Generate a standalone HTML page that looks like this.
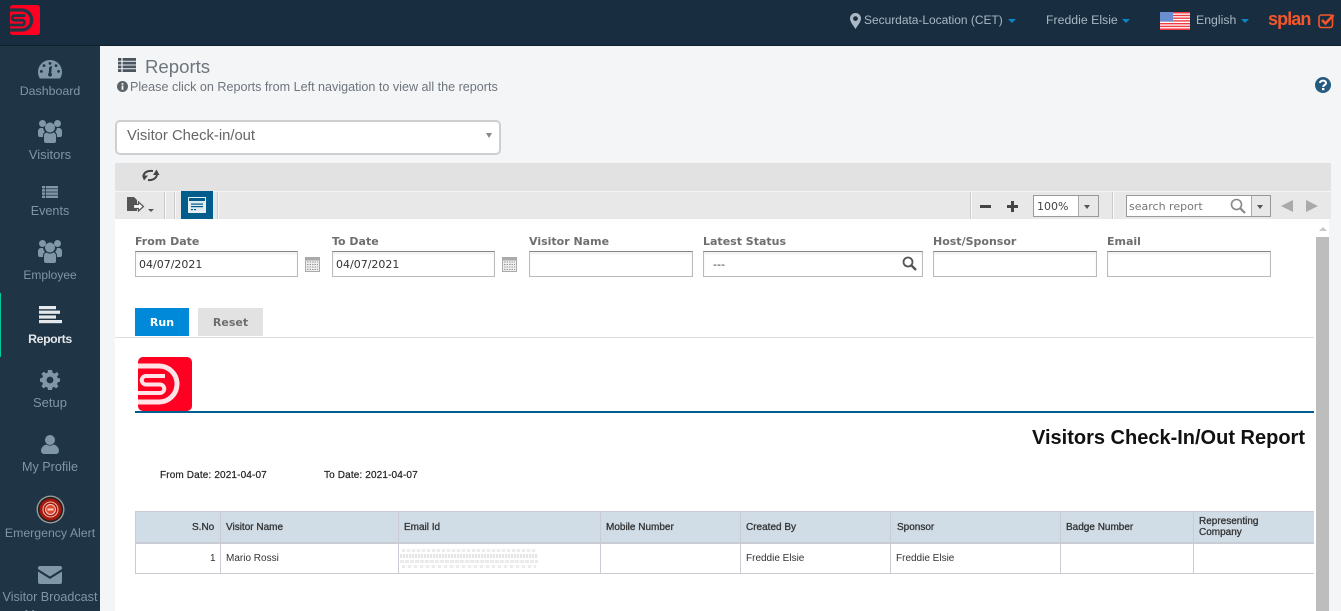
<!DOCTYPE html>
<html><head><meta charset="utf-8"><style>
*{box-sizing:border-box}
html,body{margin:0;padding:0;width:1341px;height:611px;overflow:hidden;background:#f4f5f7}
body{position:relative;font-family:"Liberation Sans",sans-serif}
.a{position:absolute}
.t{position:absolute;white-space:nowrap}
.nav{position:absolute;left:0;width:100px;text-align:center;font-size:12.6px;color:#8095a5;white-space:nowrap;line-height:16px}
.top{position:absolute;white-space:nowrap;font-size:12.3px;color:#a9b8c4;line-height:16px;top:12px}
.car{position:absolute;top:19px;width:0;height:0;border-left:4px solid transparent;border-right:4px solid transparent;border-top:4px solid #0a86c8}
.lab{position:absolute;top:235px;font:bold 11px/14px "DejaVu Sans",sans-serif;color:#6e6e6e;white-space:nowrap}
.in{position:absolute;top:251px;height:26px;background:#fff;border:1px solid #bbb;border-top:1px solid #858585;font:11px/26px "DejaVu Sans",sans-serif;color:#333;padding-left:3px;box-shadow:inset 0 2px 2px #f0f0f0}
.th,.td{position:absolute;font-size:10px;color:#222;white-space:nowrap;line-height:11px}
.th{font-weight:bold;top:522px;color:#333;font-weight:normal;-webkit-text-stroke:.3px #333}
.td{top:552px;color:#333}
.v{position:absolute;width:1px;top:511px;height:62px;background:#c9ccd4}
.sep{position:absolute;top:192px;width:1px;height:27px;background:#ccc;box-shadow:1px 0 0 #f8f8f8}
</style></head><body>

<div class="a" style="left:0;top:0;width:1341px;height:46px;background:#182e40;border-bottom:1px solid #10202c"></div>
<svg class="a" style="left:10px;top:5px" width="30" height="30" viewBox="0 0 54 54"><rect width="54" height="54" rx="5" fill="#ff0022"/><g fill="none" stroke="#1f3545" stroke-width="6"><path d="M0 9H21A18 18 0 0 1 21 45H0"/><path d="M27 19H8A4.2 4.2 0 0 0 8 27.5H22A4.2 4.2 0 0 1 22 36H0" stroke-width="5"/></g></svg>

<svg class="a" style="left:850px;top:13px" width="11" height="16" viewBox="0 0 11 16"><path fill-rule="evenodd" d="M5.5 0A5.5 5.5 0 0 0 0 5.5C0 9 3.5 12.5 5.5 16 7.5 12.5 11 9 11 5.5A5.5 5.5 0 0 0 5.5 0ZM5.5 3.2A2.4 2.4 0 1 1 5.5 8 2.4 2.4 0 0 1 5.5 3.2Z" fill="#a9b8c4"/></svg>
<div class="top" style="left:864px;font-size:11.95px">Securdata-Location (CET)</div><div class="car" style="left:1008px"></div>
<div class="top" style="left:1046px">Freddie Elsie</div><div class="car" style="left:1122px"></div>
<svg class="a" style="left:1160px;top:12px" width="30" height="18" viewBox="0 0 30 18"><rect width="30" height="18" fill="#fff"/><g fill="#ee3b44"><rect width="30" height="1.5"/><rect y="2.8" width="30" height="1.4"/><rect y="5.5" width="30" height="1.4"/><rect y="8.2" width="30" height="1.4"/><rect y="11" width="30" height="1.4"/><rect y="13.7" width="30" height="1.4"/><rect y="16.4" width="30" height="1.6"/></g><rect width="13" height="9.6" fill="#6b8ed0"/></svg>
<div class="top" style="left:1196px">English</div><div class="car" style="left:1241px"></div>
<div class="t" style="left:1268px;top:9px;font:bold 18px/20px 'Liberation Sans',sans-serif;color:#f4562a;letter-spacing:-.9px">splan</div>
<svg class="a" style="left:1318px;top:12px" width="17" height="17" viewBox="0 0 17 17"><rect x="1" y="3" width="13.5" height="12.5" rx="2.5" fill="none" stroke="#f4562a" stroke-width="1.6"/><path d="M4 8L7.500 11.500 15.500 3" fill="none" stroke="#f4562a" stroke-width="2.600"/></svg>

<div class="a" style="left:0;top:46px;width:100px;height:565px;background:#1f3545"></div>
<div class="a" style="left:0;top:293px;width:1px;height:64px;background:#00c8a0"></div>

<svg class="a" style="left:38px;top:60px" width="24" height="19" viewBox="0 0 24 19"><path fill="#8097a8" fill-rule="evenodd" d="M12 0A12 12 0 0 0 0 12C0 14.5 .7 16.8 2 18.5L22 18.5C23.3 16.8 24 14.5 24 12A12 12 0 0 0 12 0ZM12 2A1.4 1.4 0 1 1 12 4.8 1.4 1.4 0 0 1 12 2ZM6 4.2A1.4 1.4 0 1 1 6 7 1.4 1.4 0 0 1 6 4.2ZM18 4.2A1.4 1.4 0 1 1 18 7 1.4 1.4 0 0 1 18 4.2ZM3.4 10A1.4 1.4 0 1 1 3.4 12.8 1.4 1.4 0 0 1 3.4 10ZM20.6 10A1.4 1.4 0 1 1 20.6 12.8 1.4 1.4 0 0 1 20.6 10ZM14 6L13.2 13A2 2 0 1 1 10.8 13L11.2 7Z"/></svg>
<div class="nav" style="top:83px;font-size:12.4px">Dashboard</div>

<svg class="a" style="left:38px;top:120px" width="24" height="23" viewBox="0 0 24 23"><g fill="#8097a8"><circle cx="4.5" cy="3.5" r="3.5"/><circle cx="19.5" cy="3.5" r="3.5"/><circle cx="12" cy="7.500" r="5"/><path d="M0 11A3 3 0 0 1 3 8H5C5.5 10 6 11 7 12 5 13 5 15 5 17H2A2 2 0 0 1 0 15Z"/><path d="M24 11A3 3 0 0 0 21 8H19C18.5 10 18 11 17 12 19 13 19 15 19 17H22A2 2 0 0 0 24 15Z"/><path d="M6 16C6 14 7 13 8.5 12.5 11 14 13 14 15.5 12.5 17 13 18 14 18 16V21A2 2 0 0 1 16 23H8A2 2 0 0 1 6 21Z"/></g></svg>
<div class="nav" style="top:147px;font-size:13px">Visitors</div>

<svg class="a" style="left:42px;top:186px" width="16" height="12" viewBox="0 0 16 12"><g fill="#8097a8"><rect width="16" height="2.4"/><rect y="3.2" width="16" height="2.4"/><rect y="6.4" width="16" height="2.4"/><rect y="9.6" width="16" height="2.4"/></g><rect x="3" width=".8" height="12" fill="#1f3545"/></svg>
<div class="nav" style="top:203px">Events</div>

<svg class="a" style="left:38px;top:240px" width="24" height="23" viewBox="0 0 24 23"><g fill="#8097a8"><circle cx="4.5" cy="3.5" r="3.5"/><circle cx="19.5" cy="3.5" r="3.5"/><circle cx="12" cy="7.500" r="5"/><path d="M0 11A3 3 0 0 1 3 8H5C5.5 10 6 11 7 12 5 13 5 15 5 17H2A2 2 0 0 1 0 15Z"/><path d="M24 11A3 3 0 0 0 21 8H19C18.5 10 18 11 17 12 19 13 19 15 19 17H22A2 2 0 0 0 24 15Z"/><path d="M6 16C6 14 7 13 8.5 12.5 11 14 13 14 15.5 12.5 17 13 18 14 18 16V21A2 2 0 0 1 16 23H8A2 2 0 0 1 6 21Z"/></g></svg>
<div class="nav" style="top:267px;font-size:12px">Employee</div>

<svg class="a" style="left:39px;top:306px" width="23" height="18" viewBox="0 0 23 18"><g fill="#e6e9ec"><rect width="17" height="3.2"/><rect y="4.6" width="21" height="3.2"/><rect y="9.4" width="17" height="3.2"/><rect y="14" width="23" height="3.2"/></g></svg>
<div class="nav" style="top:331px;color:#e4e7ea;font-weight:bold;font-size:12.3px;letter-spacing:-.4px">Reports</div>

<svg class="a" style="left:40px;top:370px" width="20" height="20" viewBox="0 0 20 20"><path fill="#8097a8" fill-rule="evenodd" d="M8 0H12L12.6 2.8 14.6 3.6 17 2 18.8 4.4 17 6.4 17.8 8.2 20 8.4V11.6L17.8 12.2 17 14 18.4 16.4 16 18.4 14 16.8 12.4 17.6 12 20H8L7.6 17.6 5.8 16.8 3.6 18.4 1.4 16 3 14 2.2 12.2 0 11.6V8.4L2.2 8 3 6 1.4 4 3.8 1.8 6 3.4 7.6 2.6ZM10 6.6A3.4 3.4 0 1 0 10 13.4 3.4 3.4 0 0 0 10 6.6Z"/></svg>
<div class="nav" style="top:395px;font-size:13px">Setup</div>

<svg class="a" style="left:41px;top:435px" width="18" height="19" viewBox="0 0 18 19"><circle cx="9" cy="5" r="5" fill="#8097a8"/><path d="M0 16C0 12 3 10 5.5 9.5 7.5 11 10.5 11 12.5 9.5 15 10 18 12 18 16A3 3 0 0 1 15 19H3A3 3 0 0 1 0 16Z" fill="#8097a8"/></svg>
<div class="nav" style="top:459px">My Profile</div>

<svg class="a" style="left:36px;top:495px" width="29" height="29" viewBox="0 0 29 29"><circle cx="14.5" cy="14.5" r="14" fill="#9a9a9a"/><circle cx="14.5" cy="14.5" r="12.6" fill="#222"/><circle cx="14.5" cy="14.5" r="11" fill="#a5180e"/><circle cx="14.5" cy="14.5" r="7.5" fill="none" stroke="#f0c0b0" stroke-width="1"/><circle cx="14.5" cy="14.5" r="5" fill="#e04a30" stroke="#f5d0c5" stroke-width="1"/><rect x="11.5" y="13.5" width="6" height="2" fill="#f5d0c5"/></svg>
<div class="nav" style="top:525px;font-size:12.3px">Emergency Alert</div>

<svg class="a" style="left:38px;top:566px" width="24" height="18" viewBox="0 0 24 18"><path fill="#8097a8" d="M2 0H22A2 2 0 0 1 24 2V3L12 10.5 0 3V2A2 2 0 0 1 2 0ZM0 5.5L12 13 24 5.5V16A2 2 0 0 1 22 18H2A2 2 0 0 1 0 16Z"/></svg>
<div class="nav" style="top:589px">Visitor Broadcast</div>
<div class="nav" style="top:607px">Message</div>

<svg class="a" style="left:118px;top:58px" width="18" height="14" viewBox="0 0 18 15" preserveAspectRatio="none"><g fill="#4a5560"><rect width="3.4" height="3"/><rect x="4.6" width="13.4" height="3"/><rect y="4" width="3.4" height="3"/><rect x="4.6" y="4" width="13.4" height="3"/><rect y="8" width="3.4" height="3"/><rect x="4.6" y="8" width="13.4" height="3"/><rect y="12" width="3.4" height="3"/><rect x="4.6" y="12" width="13.4" height="3"/></g></svg>
<div class="t" style="left:145px;top:55px;font-size:18.6px;line-height:23px;color:#6d757c">Reports</div>
<svg class="a" style="left:117px;top:81px" width="11" height="11" viewBox="0 0 11 11"><circle cx="5.5" cy="5.5" r="5.5" fill="#5a6268"/><rect x="4.6" y="4.6" width="1.8" height="4.2" fill="#f4f5f7"/><rect x="4.6" y="2.2" width="1.8" height="1.6" fill="#f4f5f7"/></svg>
<div class="t" style="left:130px;top:79px;font-size:12.58px;line-height:16px;color:#6d757c">Please click on Reports from Left navigation to view all the reports</div>
<svg class="a" style="left:1315px;top:77px" width="16" height="16" viewBox="0 0 16 16"><circle cx="8" cy="8" r="8" fill="#265a7e"/><path d="M5 6C5 2.8 11 2.8 11 6 11 8 8.2 7.8 8.2 10" fill="none" stroke="#fff" stroke-width="2"/><rect x="7" y="11" width="2.4" height="2.2" fill="#fff"/></svg>

<div class="a" style="left:115px;top:120px;width:386px;height:35px;background:#fff;border:2px solid #cfcfcf;border-radius:5px"></div>
<div class="t" style="left:127px;top:127px;font-size:14.8px;line-height:18px;color:#666">Visitor Check-in/out</div>
<div class="a" style="left:486px;top:133px;border-left:3px solid transparent;border-right:3px solid transparent;border-top:5px solid #888"></div>

<div class="a" style="left:115px;top:163px;width:1216px;height:28px;background:#e2e2e2"></div>
<svg class="a" style="left:141px;top:169px" width="19" height="13" viewBox="0 0 19 13"><path fill="none" stroke="#444" stroke-width="2" d="M2.5 6.5C3.5 3 7 1.5 12 2"/><path fill="#444" d="M12 6H18.5L15.5 0.500ZM1 6.500H7L3 11.500Z"/><path fill="none" stroke="#444" stroke-width="2" d="M16 6C15 9.800 11 11.500 7 11"/></svg>

<div class="a" style="left:115px;top:192px;width:1216px;height:27px;background:#e8e8e8"></div>
<svg class="a" style="left:127px;top:197px" width="18" height="17" viewBox="0 0 18 17"><path fill="#555" d="M0 0H7L10 3V7H7V10H10V14H0Z"/><path fill="#fff" stroke="#555" stroke-width="1.200" d="M6.500 7.500H11.500V5L16.500 9.500 11.500 14V11.500H6.500Z"/></svg>
<div class="a" style="left:148px;top:209px;border-left:3px solid transparent;border-right:3px solid transparent;border-top:3px solid #555"></div>
<div class="sep" style="left:164px"></div><div class="sep" style="left:174px"></div>
<div class="a" style="left:181px;top:191px;width:32px;height:28px;background:#005d8c"></div>
<svg class="a" style="left:188px;top:197px" width="18" height="16" viewBox="0 0 18 16"><rect x=".7" y=".7" width="16.600" height="14.600" fill="#dfe9ef" stroke="#fff" stroke-width="1.200"/><rect x="1" y="1" width="16" height="3" fill="#005d8c"/><rect x="3" y="6.500" width="12" height="1.200" fill="#005d8c"/><rect x="3" y="9" width="12" height="1.200" fill="#005d8c"/><rect x="3" y="12" width="2" height="1.200" fill="#005d8c"/><rect x="6" y="12" width="2" height="1.200" fill="#005d8c"/></svg>
<div class="sep" style="left:217px"></div>
<div class="sep" style="left:970px"></div>
<div class="a" style="left:980px;top:205px;width:11px;height:3px;background:#444"></div>
<div class="a" style="left:1007px;top:205px;width:11px;height:3px;background:#444"></div><div class="a" style="left:1011px;top:201px;width:3px;height:11px;background:#444"></div>
<div class="a" style="left:1033px;top:195px;width:66px;height:22px;background:#fff;border:1px solid #999"></div>
<div class="t" style="left:1037px;top:200px;font:11px/14px 'DejaVu Sans',sans-serif;color:#444">100%</div>
<div class="a" style="left:1078px;top:196px;width:20px;height:20px;background:#e8e8e8;border-left:1px solid #aaa"></div>
<div class="a" style="left:1084px;top:205px;border-left:3px solid transparent;border-right:3px solid transparent;border-top:4px solid #555"></div>
<div class="sep" style="left:1112px"></div>
<div class="a" style="left:1126px;top:195px;width:145px;height:22px;background:#fff;border:1px solid #999"></div>
<div class="t" style="left:1129px;top:200px;font:11px/14px 'DejaVu Sans',sans-serif;color:#777">search report</div>
<svg class="a" style="left:1230px;top:198px" width="16" height="16" viewBox="0 0 16 16"><circle cx="6.500" cy="6.500" r="5" fill="none" stroke="#888" stroke-width="1.600"/><path d="M10 10L15 15" stroke="#888" stroke-width="2.200"/></svg>
<div class="a" style="left:1251px;top:196px;width:19px;height:20px;background:#e8e8e8;border-left:1px solid #aaa"></div>
<div class="a" style="left:1257px;top:205px;border-left:3px solid transparent;border-right:3px solid transparent;border-top:4px solid #555"></div>
<div class="a" style="left:1281px;top:200px;border-top:6px solid transparent;border-bottom:6px solid transparent;border-right:12px solid #aaa"></div>
<div class="a" style="left:1306px;top:200px;border-top:6px solid transparent;border-bottom:6px solid transparent;border-left:12px solid #aaa"></div>

<div class="a" style="left:115px;top:219px;width:1214px;height:392px;background:#fff"></div>
<div class="a" style="left:1316px;top:237px;width:13px;height:374px;background:#bdbdbd"></div>
<div class="a" style="left:1319px;top:227px;border-left:4px solid transparent;border-right:4px solid transparent;border-bottom:4px solid #c8c8c8"></div>

<div class="lab" style="left:135px">From Date</div>
<div class="lab" style="left:332px">To Date</div>
<div class="lab" style="left:529px">Visitor Name</div>
<div class="lab" style="left:703px">Latest Status</div>
<div class="lab" style="left:933px">Host/Sponsor</div>
<div class="lab" style="left:1107px">Email</div>
<div class="in" style="left:135px;width:163px">04/07/2021</div>
<div class="in" style="left:332px;width:163px">04/07/2021</div>
<div class="in" style="left:529px;width:164px"></div>
<div class="in" style="left:703px;width:220px;padding-left:9px">---</div>
<svg class="a" style="left:902px;top:256px" width="15" height="15" viewBox="0 0 15 15"><circle cx="6" cy="6" r="4.500" fill="none" stroke="#555" stroke-width="1.800"/><path d="M9.500 9.500L14 14" stroke="#555" stroke-width="2.400"/></svg>
<div class="in" style="left:933px;width:164px"></div>
<div class="in" style="left:1107px;width:164px"></div>
<svg class="a" style="left:305px;top:257px" width="15" height="15" viewBox="0 0 15 15"><rect x=".5" y=".5" width="14" height="14" fill="#eee" stroke="#aaa"/><rect x="1" y="1" width="13" height="2.500" fill="#aaa"/><path d="M2 5H13M2 7.500H13M2 10H13M2 12.500H13" stroke="#999" stroke-dasharray="1.500 1"/></svg>
<svg class="a" style="left:502px;top:257px" width="15" height="15" viewBox="0 0 15 15"><rect x=".5" y=".5" width="14" height="14" fill="#eee" stroke="#aaa"/><rect x="1" y="1" width="13" height="2.500" fill="#aaa"/><path d="M2 5H13M2 7.500H13M2 10H13M2 12.500H13" stroke="#999" stroke-dasharray="1.500 1"/></svg>

<div class="a" style="left:135px;top:308px;width:54px;height:28px;background:#0088d9;color:#fff;font:bold 11px/30px 'DejaVu Sans',sans-serif;text-align:center">Run</div>
<div class="a" style="left:198px;top:308px;width:65px;height:28px;background:#e2e2e2;color:#6e6e6e;font:bold 11px/30px 'DejaVu Sans',sans-serif;text-align:center">Reset</div>
<div class="a" style="left:115px;top:337px;width:1199px;height:1px;background:#ddd"></div>

<svg class="a" style="left:138px;top:357px" width="54" height="54" viewBox="0 0 54 54"><rect width="54" height="54" rx="5" fill="#ff0022"/><g fill="none" stroke="#ffe3e7" stroke-width="5"><path d="M0 9H21A18 18 0 0 1 21 45H0"/><path d="M27 19H8A4.200 4.200 0 0 0 8 27.500H22A4.200 4.200 0 0 1 22 36H0" stroke-width="4"/></g></svg>
<div class="a" style="left:135px;top:411px;width:1179px;height:2px;background:#005f8f"></div>

<div class="t" style="right:36px;top:426px;font-size:20px;line-height:24px;font-weight:bold;color:#111">Visitors Check-In/Out Report</div>
<div class="t" style="left:160px;top:470px;font-size:10px;letter-spacing:.14px;line-height:11px;color:#222;-webkit-text-stroke:.2px #222">From Date: 2021-04-07</div>
<div class="t" style="left:324px;top:470px;font-size:10px;letter-spacing:.14px;line-height:11px;color:#222;-webkit-text-stroke:.2px #222">To Date: 2021-04-07</div>

<div class="a" style="left:135px;top:511px;width:1179px;height:31px;background:#d0dde7"></div>
<div class="a" style="left:135px;top:511px;width:1179px;height:1px;background:#c9ccd4"></div>
<div class="a" style="left:135px;top:542px;width:1179px;height:2px;background:#c9ccd4"></div>
<div class="a" style="left:135px;top:573px;width:1179px;height:1px;background:#c9ccd4"></div>
<div class="v" style="left:135px"></div><div class="v" style="left:220px"></div><div class="v" style="left:398px"></div><div class="v" style="left:600px"></div><div class="v" style="left:740px"></div><div class="v" style="left:890px"></div><div class="v" style="left:1060px"></div><div class="v" style="left:1193px"></div>

<div class="th" style="left:192px">S.No</div>
<div class="th" style="left:226px">Visitor Name</div>
<div class="th" style="left:404px">Email Id</div>
<div class="th" style="left:606px">Mobile Number</div>
<div class="th" style="left:746px">Created By</div>
<div class="th" style="left:897px">Sponsor</div>
<div class="th" style="left:1066px">Badge Number</div>
<div class="th" style="left:1199px;top:516px">Representing<br>Company</div>
<div class="td" style="left:210px;top:553px">1</div>
<div class="td" style="left:226px;top:553px">Mario Rossi</div>
<div class="a" style="left:402px;top:549px;width:134px;height:3px;background:repeating-linear-gradient(90deg,#ececec 0 3px,#fbfbfb 3px 5px)"></div>
<div class="a" style="left:400px;top:554px;width:138px;height:4px;background:repeating-linear-gradient(90deg,#e6e6e6 0 2px,#fafafa 2px 3px)"></div>
<div class="a" style="left:400px;top:560px;width:138px;height:3px;background:repeating-linear-gradient(90deg,#ebebeb 0 4px,#fbfbfb 4px 5px)"></div>
<div class="a" style="left:402px;top:565px;width:134px;height:3px;background:repeating-linear-gradient(90deg,#ececec 0 3px,#fbfbfb 3px 6px)"></div>
<div class="td" style="left:746px;top:553px">Freddie Elsie</div>
<div class="td" style="left:896px;top:553px">Freddie Elsie</div>
</body></html>
